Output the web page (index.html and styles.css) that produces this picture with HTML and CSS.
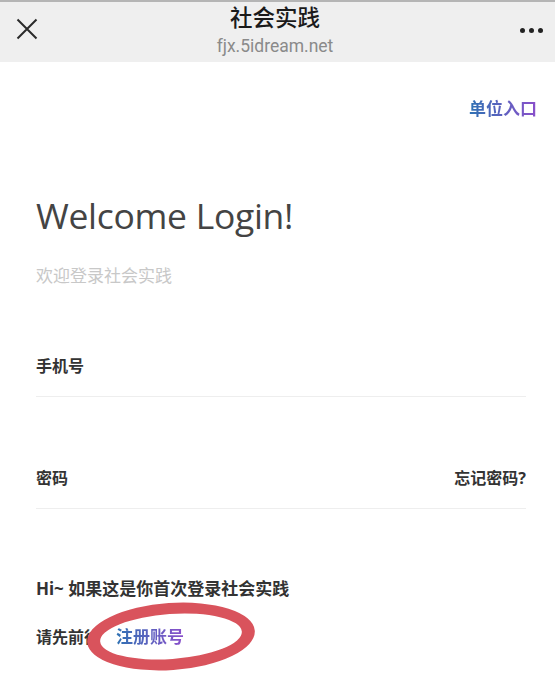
FILE: index.html
```html
<!doctype html>
<html>
<head>
    <meta charset="UTF-8">
    <title>社会实践</title>
    <link rel="stylesheet" href="styles.css">
</head>
<body>
<header class="topbar">
    <svg class="close" width="22" height="22" viewBox="0 0 22 22">
        <path d="M1.5 1.5 L20.5 20.5 M20.5 1.5 L1.5 20.5" stroke="#2a2a2a" stroke-width="2" fill="none"/>
    </svg>
    <div class="titles">
        <div class="title">社会实践</div>
        <div class="url">fjx.5idream.net</div>
    </div>
    <div class="more"><span></span><span></span><span></span></div>
</header>

<main class="page">
    <div class="unit"><span class="grad">单位入口</span></div>

    <h1>Welcome Login!</h1>
    <p class="sub">欢迎登录社会实践</p>

    <div class="field">
        <span class="label">手机号</span>
    </div>
    <div class="field">
        <span class="label">密码</span>
        <span class="label">忘记密码?</span>
    </div>

    <p class="hint">Hi~ 如果这是你首次登录社会实践</p>
    <p class="hint reg">请先前往<span class="grad link">注册账号</span><span class="mark"></span></p>
</main>
</body>
</html>
```

FILE: styles.css
```css
body {
    margin: 0;
    background: #fff;
    font-family: "Noto Sans", "Noto Sans CJK SC", sans-serif;
    color: #333;
}
.topbar {
    height: 60px;
    background: #efefef;
    border-top: 2px solid #b5b5b5;
    display: flex;
    align-items: center;
    padding: 0 12px 0 16px;
}
.close {
    flex: none;
    margin-top: -6px;
}
.titles {
    flex: 1;
    text-align: center;
    padding-right: 8px;
}
.title {
    font-size: 22.5px;
    font-weight: 500;
    color: #1a1a1a;
    line-height: 26px;
    margin-top: -3px;
}
.url {
    font-size: 17.5px;
    color: #8a8a8a;
    line-height: 22px;
    margin-top: 4px;
    font-family: "Roboto", "Noto Sans CJK SC", sans-serif;
}
.more {
    display: flex;
    gap: 4px;
    margin-top: -4px;
}
.more span {
    width: 5px;
    height: 5px;
    border-radius: 50%;
    background: #222;
}
.page {
    padding: 0 27px 40px 36px;
}
.unit {
    text-align: right;
    padding-top: 36px;
    margin-right: -9px;
    font-size: 17px;
    font-weight: 700;
    line-height: 22px;
}
.grad {
    background: linear-gradient(90deg, #2f72b3, #8b4fcb);
    -webkit-background-clip: text;
    background-clip: text;
    color: transparent;
    font-weight: 700;
}
h1 {
    margin: 73px 0 0;
    font-family: "Open Sans", sans-serif;
    font-weight: 400;
    font-size: 35.5px;
    line-height: 44px;
    color: #444;
    letter-spacing: -0.3px;
}
.sub {
    margin: 28px 0 0;
    font-size: 17px;
    color: #c8c8c8;
    line-height: 22px;
}
.field {
    display: flex;
    justify-content: space-between;
    border-bottom: 1px solid #eee;
    padding-bottom: 19px;
    margin-top: 68px;
    margin-right: 2px;
}
.field + .field {
    margin-top: 70px;
}
.label {
    font-size: 16px;
    font-weight: 700;
    color: #333;
    line-height: 22px;
}
.hint {
    margin: 69px 0 0;
    font-size: 17px;
    font-weight: 700;
    color: #333;
    line-height: 22px;
}
.hint.reg {
    margin-top: 26px;
    font-size: 16px;
    position: relative;
}
.link {
    font-size: 17px;
    margin-left: 16px;
}
.mark {
    position: absolute;
    left: 51px;
    top: -23px;
    width: 168px;
    height: 67px;
    border: 13px solid #d9535c;
    border-top-width: 11px;
    border-bottom-width: 11px;
    border-radius: 50%;
    box-sizing: border-box;
    transform: rotate(-4deg);
}
```
